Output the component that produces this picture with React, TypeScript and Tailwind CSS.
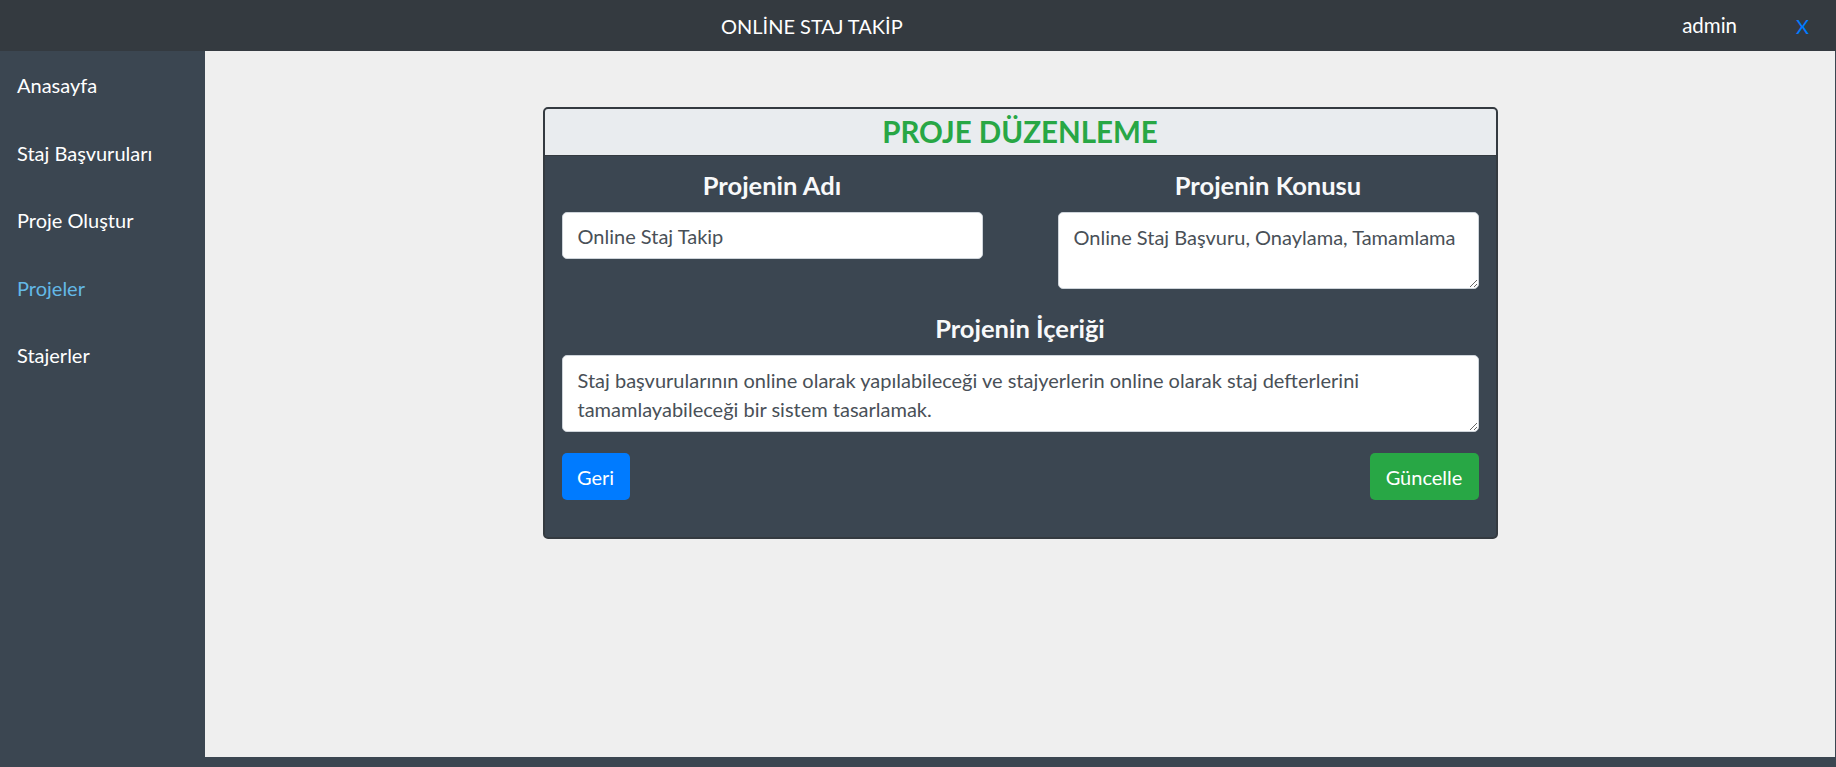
import React from 'react'

const menu = ['Anasayfa', 'Staj Başvuruları', 'Proje Oluştur', 'Projeler', 'Stajerler']

function Header() {
  return (
    <header className="flex h-[51px] items-center bg-[#343a40] pl-[721px] pr-[27px] text-[20px] text-white">
      <span>ONLİNE STAJ TAKİP</span>
      <span className="ml-auto text-[20.5px]">admin</span>
      <span className="ml-[59px] text-[#007bff]">X</span>
    </header>
  )
}

function Sidebar() {
  return (
    <nav className="w-[205px] shrink-0 bg-[#3b4651]">
      {menu.map((item) => (
        <div
          key={item}
          className={`h-[67.5px] px-[17px] pt-[20px] text-[20px] leading-[28px] ${item === 'Projeler' ? 'text-[#63b8e6]' : 'text-white'}`}
        >
          {item}
        </div>
      ))}
    </nav>
  )
}

export default function App() {
  // alanlar sadece gösterim için
  const fieldClass =
    'w-full rounded-[5px] border border-[#ced4da] bg-white px-[15px] text-[20px] text-[#495057] outline-none'

  return (
    <div className="h-[767px] w-[1836px] overflow-hidden font-['Lato','Liberation_Sans',sans-serif]">
      <Header />
      <div className="flex h-[706px]">
        <Sidebar />
        <main className="flex flex-1 justify-center border-r border-[#3b4651] bg-[#efefef] pt-[56px]">
          <div className="h-[432px] w-[955px] overflow-hidden rounded-[5px] border-2 border-[#343a40] bg-[#3b4651]">
            <div className="flex h-[47px] items-center justify-center border-b border-[#343a40] bg-[#e9ecef]">
              <h4 className="text-[29.5px] font-bold leading-none text-[#28a745]">PROJE DÜZENLEME</h4>
            </div>

            <div className="px-[17px] pt-[14px]">
              <div className="flex justify-between">
                <div className="w-[421px]">
                  <h5 className="mb-[12px] text-center text-[25.5px] font-bold leading-[30px] text-[#f8f9fa]">Projenin Adı</h5>
                  <input className={`${fieldClass} h-[47px]`} defaultValue="Online Staj Takip" />
                </div>
                <div className="w-[421px]">
                  <h5 className="mb-[12px] text-center text-[25.5px] font-bold leading-[30px] text-[#f8f9fa]">Projenin Konusu</h5>
                  <textarea
                    className={`${fieldClass} block h-[77px] pt-[10px] leading-[29px]`}
                    defaultValue="Online Staj Başvuru, Onaylama, Tamamlama"
                  />
                </div>
              </div>

              <h5 className="mb-[12px] mt-[24px] text-center text-[25.5px] font-bold leading-[30px] text-[#f8f9fa]">Projenin İçeriği</h5>
              <textarea
                className={`${fieldClass} block h-[77px] pt-[10px] text-[20.2px] leading-[29px]`}
                defaultValue="Staj başvurularının online olarak yapılabileceği ve stajyerlerin online olarak staj defterlerini tamamlayabileceği bir sistem tasarlamak."
              />

              <div className="mt-[21px] flex justify-between">
                <button className="h-[47px] w-[68px] rounded-[5px] bg-[#007bff] text-[20px] text-white">Geri</button>
                <button className="h-[47px] w-[109px] rounded-[5px] bg-[#28a745] text-[20px] text-white">Güncelle</button>
              </div>
            </div>
          </div>
        </main>
      </div>
      <div className="h-[10px] bg-[#3b4651]" />
    </div>
  )
}
